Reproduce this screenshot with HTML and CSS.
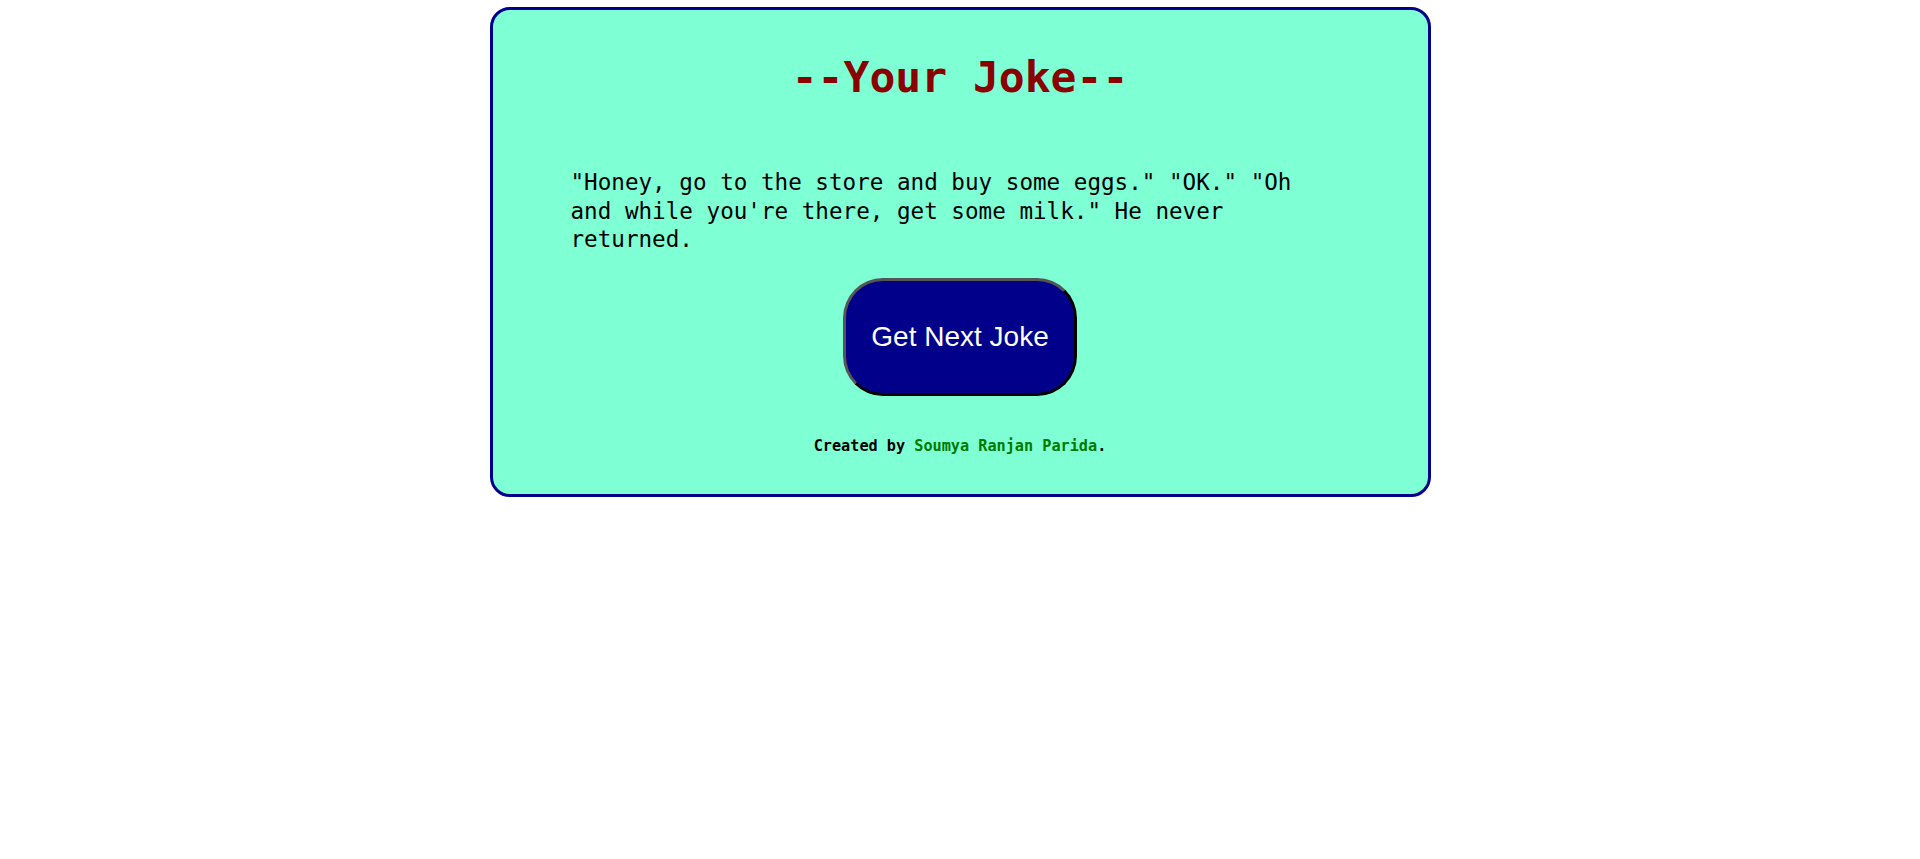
FILE: index.html
```html
<!DOCTYPE html>
<html lang="en">
<head>
<meta charset="utf-8">
<title>Your Joke</title>
<link rel="stylesheet" href="styles.css">
</head>
<body>
<main class="card">
  <h1 class="title">--Your Joke--</h1>
  <p class="joke">"Honey, go to the store and buy some eggs." "OK." "Oh and while you're there, get some milk." He never returned.</p>
  <div class="actions">
    <button class="next-btn" type="button">Get Next Joke</button>
  </div>
  <p class="credit">Created by <a class="author" href="#">Soumya Ranjan Parida</a>.</p>
</main>
</body>
</html>
```

FILE: styles.css
```css
html, body {
  margin: 0;
  padding: 0;
  background: #ffffff;
}

body {
  font-family: "DejaVu Sans Mono", "Liberation Mono", monospace;
  color: #000;
}

.card {
  box-sizing: border-box;
  width: 941px;
  margin: 7px auto 0;
  padding: 42px 0 39.5px;
  background: #7fffd4;
  border: 3px solid #00008b;
  border-radius: 20px;
  display: flex;
  flex-direction: column;
  align-items: stretch;
}

.title {
  margin: 0;
  text-align: center;
  font-size: 43px;
  line-height: 50px;
  font-weight: bold;
  color: #8b0000;
}

.joke {
  margin: 66.3px 0 0;
  padding: 0 100px 0 78px;
  font-size: 22.6px;
  line-height: 28.5px;
}

.actions {
  display: flex;
  justify-content: center;
  margin-top: 24.7px;
}

.next-btn {
  font-family: "Liberation Sans", Arial, sans-serif;
  font-size: 28px;
  line-height: 32px;
  color: #ffffff;
  background: #00008b;
  padding: 40px 25px 40px;
  border: 3px solid;
  border-color: #555555 #000000 #000000 #555555;
  border-radius: 40px;
  cursor: pointer;
}

.credit {
  margin: 40.5px 0 0;
  text-align: center;
  font-size: 15.2px;
  line-height: 18px;
  font-weight: bold;
}

.author {
  color: #007a00;
  text-decoration: none;
}
```
